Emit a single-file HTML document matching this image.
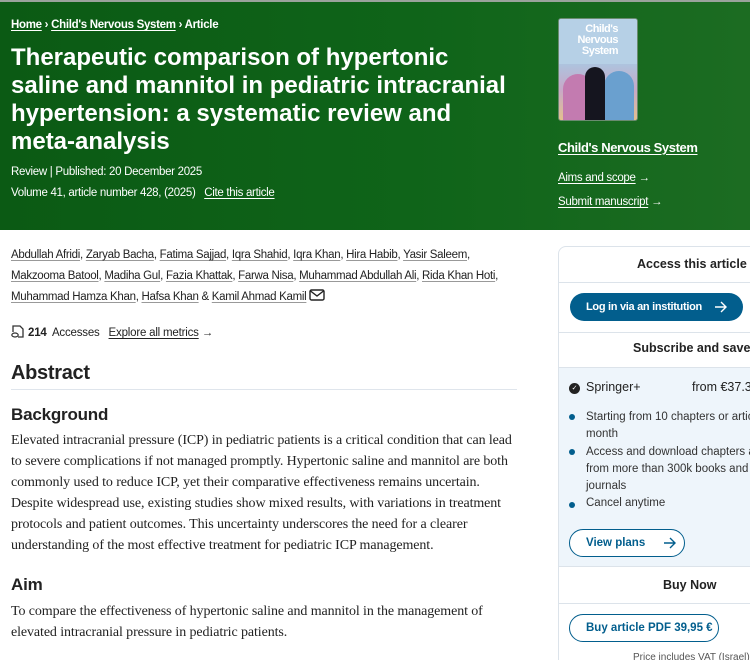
<!DOCTYPE html>
<html><head><meta charset="utf-8"><style>
*{margin:0;padding:0;box-sizing:border-box}
html,body{width:750px;height:660px;overflow:hidden}
body{background:#fff;font-family:"Liberation Sans",sans-serif;color:#222;position:relative}
.hdr{position:absolute;left:0;top:0;width:750px;height:230px;background:linear-gradient(90deg,#0b5a14 0%,#0f6419 55%,#1c6c22 100%);border-top:2px solid #9aa39c}
.a{position:absolute;white-space:nowrap}
.w{color:#fff}
u{text-decoration:underline;text-underline-offset:2px}
.title{left:11px;top:44px;font-size:24px;font-weight:bold;line-height:28px;letter-spacing:0px;color:#fff}
.cover{left:558px;top:18px;width:80px;height:103px;border-radius:3px;background:linear-gradient(180deg,#8fb7d9 0%,#a9c8e2 40%,#c7a9c8 70%,#e3c08e 100%);overflow:hidden;border:1px solid #6a8b6f}
.au{font-size:11.5px;line-height:21px;letter-spacing:-0.3px}
.au u{text-decoration-color:#999}
.body{font-family:"Liberation Serif",serif;font-size:14px;line-height:21px;color:#222}
.side{position:absolute;left:558px;top:246px;width:192px;height:414px;border:1px solid #dce3ea;border-right:none;border-bottom:none;border-radius:8px 0 0 0;overflow:hidden}
.sec{position:absolute;font-weight:bold;font-size:12.5px;color:#222;white-space:nowrap}
.hr{position:absolute;left:0;width:192px;height:1px;background:#dce3ea}
.btn{position:absolute;border-radius:16px;font-weight:bold;font-size:11.5px;display:flex;align-items:center;padding-left:16px;white-space:nowrap}
.btn svg{margin-left:12px}
.sm{font-size:11.5px;color:#333}
.dot{position:absolute;width:6px;height:6px;border-radius:50%;background:#025e8d}
</style></head><body>
<div class="hdr"></div>
<div class="a w" style="left:11px;top:19px;font-size:11.5px;font-weight:bold;letter-spacing:-0.3px"><u>Home</u> › <u>Child's Nervous System</u> › Article</div>
<div class="a title">Therapeutic comparison of hypertonic<br>saline and mannitol in pediatric intracranial<br>hypertension: a systematic review and<br>meta-analysis</div>
<div class="a w" style="left:11px;top:166px;font-size:11.5px;letter-spacing:-0.3px">Review | Published: 20 December 2025</div>
<div class="a w" style="left:11px;top:187px;font-size:11.5px;letter-spacing:-0.3px">Volume 41, article number 428, (2025) &nbsp;&nbsp;<u>Cite this article</u></div>
<div class="a cover">
 <div style="position:absolute;left:0;top:0;width:100%;height:45px;background:#b6d0e6"></div>
 <div style="position:absolute;left:4px;top:5px;font-size:11px;line-height:11px;color:#fff;font-weight:bold;letter-spacing:-0.5px;text-align:right;width:55px">Child's<br>Nervous<br>System</div>
 <div style="position:absolute;left:4px;top:55px;width:30px;height:55px;border-radius:15px 15px 0 0;background:#c37bb0"></div>
 <div style="position:absolute;left:45px;top:52px;width:30px;height:55px;border-radius:15px 15px 0 0;background:#6aa0cf"></div>
 <div style="position:absolute;left:26px;top:48px;width:20px;height:60px;border-radius:10px 10px 0 0;background:#15151f"></div>
</div>
<div class="a w" style="left:558px;top:140px;font-size:13px;font-weight:bold;letter-spacing:-0.4px"><u>Child's Nervous System</u></div>
<div class="a w" style="left:558px;top:172px;font-size:11.5px;letter-spacing:-0.3px"><u>Aims and scope</u> →</div>
<div class="a w" style="left:558px;top:196px;font-size:11.5px;letter-spacing:-0.3px"><u>Submit manuscript</u> →</div>

<div class="a au" style="left:11px;top:245px"><u>Abdullah Afridi</u>, <u>Zaryab Bacha</u>, <u>Fatima Sajjad</u>, <u>Iqra Shahid</u>, <u>Iqra Khan</u>, <u>Hira Habib</u>, <u>Yasir Saleem</u>,<br><u>Makzooma Batool</u>, <u>Madiha Gul</u>, <u>Fazia Khattak</u>, <u>Farwa Nisa</u>, <u>Muhammad Abdullah Ali</u>, <u>Rida Khan Hoti</u>,<br><u>Muhammad Hamza Khan</u>, <u>Hafsa Khan</u> &amp; <u>Kamil Ahmad Kamil</u> <svg width="16" height="12" viewBox="0 0 16 12" style="vertical-align:-1px"><rect x="1" y="1" width="14" height="10" rx="1.5" fill="none" stroke="#222" stroke-width="1.4"/><path d="M1.5 2 L8 7 L14.5 2" fill="none" stroke="#222" stroke-width="1.4"/></svg></div>
<div class="a" style="left:11px;top:325px;font-size:11.5px;letter-spacing:-0.2px"><svg width="14" height="13" viewBox="0 0 14 13" style="vertical-align:-2px"><path d="M2 7V1h7l3 3v8H7" fill="none" stroke="#333" stroke-width="1.3"/><ellipse cx="4" cy="10" rx="3.2" ry="2" fill="none" stroke="#333" stroke-width="1.2"/></svg> <b>214</b>&nbsp; Accesses &nbsp;&nbsp;<u>Explore all metrics</u> →</div>

<div class="a" style="left:11px;top:362px;font-size:20px;font-weight:bold;letter-spacing:-0.3px">Abstract</div>
<div class="a" style="left:11px;top:389px;width:506px;height:1px;background:#dfe5ec"></div>
<div class="a" style="left:11px;top:405px;font-size:17px;font-weight:bold;letter-spacing:-0.2px">Background</div>
<div class="a body" style="left:11px;top:430px;letter-spacing:-0.1px">Elevated intracranial pressure (ICP) in pediatric patients is a critical condition that can lead<br>to severe complications if not managed promptly. Hypertonic saline and mannitol are both<br>commonly used to reduce ICP, yet their comparative effectiveness remains uncertain.<br>Despite widespread use, existing studies show mixed results, with variations in treatment<br>protocols and patient outcomes. This uncertainty underscores the need for a clearer<br>understanding of the most effective treatment for pediatric ICP management.</div>
<div class="a" style="left:11px;top:575px;font-size:17px;font-weight:bold;letter-spacing:-0.2px">Aim</div>
<div class="a body" style="left:11px;top:601px;letter-spacing:-0.1px">To compare the effectiveness of hypertonic saline and mannitol in the management of<br>elevated intracranial pressure in pediatric patients.</div>

<div class="side">
 <div class="sec" style="top:10px;left:78px">Access this article</div>
 <div class="hr" style="top:35px"></div>
 <div class="btn" style="left:11px;top:46px;width:173px;height:28px;background:#025e8d;color:#fff;font-size:11px;letter-spacing:-0.3px">Log in via an institution <svg width="14" height="12" viewBox="0 0 14 12"><path d="M1 6h11M7 1l5 5-5 5" fill="none" stroke="#fff" stroke-width="1.4"/></svg></div>
 <div class="hr" style="top:85px"></div>
 <div class="sec" style="top:94px;left:74px">Subscribe and save</div>
 <div style="position:absolute;left:0;top:120px;width:192px;height:200px;background:#eef5fb;border-top:1px solid #dce3ea;border-bottom:1px solid #dce3ea"></div>
 <div class="a" style="left:10px;top:136px;width:11px;height:11px;border-radius:50%;background:#222;color:#fff;font-size:7px;text-align:center;line-height:11px">✓</div>
 <div class="a" style="left:27px;top:133px;font-size:12.5px">Springer+</div>
 <div class="a" style="left:133px;top:133px;font-size:12.5px">from €37.37</div>
 <div class="dot" style="left:10px;top:167px"></div>
 <div class="a sm" style="left:27px;top:162px;line-height:17px">Starting from 10 chapters or articles per<br>month</div>
 <div class="dot" style="left:10px;top:202px"></div>
 <div class="a sm" style="left:27px;top:197px;line-height:17px">Access and download chapters and articles<br>from more than 300k books and 2,500<br>journals</div>
 <div class="dot" style="left:10px;top:255px"></div>
 <div class="a sm" style="left:27px;top:250px">Cancel anytime</div>
 <div class="btn" style="left:10px;top:282px;width:116px;height:28px;border:1px solid #025e8d;background:#fff;color:#025e8d">View plans <svg width="14" height="12" viewBox="0 0 14 12" style="margin-left:18px"><path d="M1 6h11M7 1l5 5-5 5" fill="none" stroke="#025e8d" stroke-width="1.4"/></svg></div>
 <div class="sec" style="top:331px;left:104px">Buy Now</div>
 <div class="hr" style="top:356px"></div>
 <div class="btn" style="left:10px;top:367px;width:150px;height:28px;border:1px solid #025e8d;background:#fff;color:#025e8d">Buy article PDF 39,95 €</div>
 <div class="a" style="left:74px;top:405px;font-size:10px;color:#555">Price includes VAT (Israel)</div>
</div>
</body></html>
